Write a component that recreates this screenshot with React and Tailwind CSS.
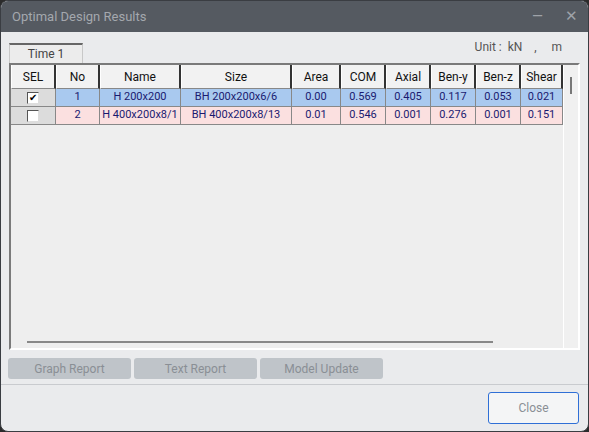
export default function App() {
  const cols = [
    ["SEL", 45], ["No", 44], ["Name", 81], ["Size", 111], ["Area", 49], ["COM", 45], ["Axial", 45], ["Ben-y", 45], ["Ben-z", 45], ["Shear", 42],
  ];
  const rows = [
    { bg: "bg-[#a9c9ef]", chk: true, v: ["1", "H 200x200", "BH 200x200x6/6", "0.00", "0.569", "0.405", "0.117", "0.053", "0.021"] },
    { bg: "bg-[#fbe0e0]", chk: false, v: ["2", "H 400x200x8/1", "BH 400x200x8/13", "0.01", "0.546", "0.001", "0.276", "0.001", "0.151"] },
  ];
  const grid = { fontFamily: "Roboto, 'Liberation Sans', sans-serif" };
  return (
    <div className="w-[589px] h-[432px] bg-[#2b2b2b] text-[12px]" style={{ fontFamily: "Roboto, 'Liberation Sans', sans-serif" }}>
      <div className="w-[589px] h-[432px] rounded-[8px] overflow-hidden bg-[#eaebed] flex flex-col border border-[#3a3d42]">
        <div className="h-[31px] bg-[#555a61] flex items-center pl-[11px] pr-[10px] shrink-0">
          <span className="text-[#a4a8ae] text-[13px] flex-1">Optimal Design Results</span>
          <span className="text-[#9ea2a8] text-[14px] mr-[22px]">—</span>
          <span className="text-[#9ea2a8] text-[15px]">✕</span>
        </div>
        <div className="flex items-end h-[31px] pl-[8px] pr-[26px] shrink-0">
          <div className="w-[74px] h-[20px] border-t-2 border-l border-r border-t-[#666] border-[#c8c8c8] bg-[#ececec] text-[#444] flex items-center justify-center">Time 1</div>
          <div className="flex-1 text-right text-[#555] mb-[7px] whitespace-pre">Unit :  kN    ,     m</div>
        </div>
        <div className="ml-[8px] mr-[8px] h-[287px] border-2 border-[#7a7a7a] border-r-white border-b-white bg-[#eeeeee] flex shrink-0" style={grid}>
          <div className="flex-1 flex flex-col">
            <div className="flex h-[24px] bg-[#f2f2f2]">
              {cols.map(([c, w]) => (
                <div key={c} style={{ width: w }} className="border-r-2 border-b border-r-[#333] border-b-[#888] border-l border-l-white flex items-center justify-center text-[#111] text-[12px] whitespace-nowrap">{c}</div>
              ))}
            </div>
            {rows.map((r, i) => (
              <div key={i} className={`flex h-[18px] ${r.bg}`}>
                <div style={{ width: 45 }} className="bg-[#dcdcdc] border-r border-b border-[#888] flex items-center justify-center">
                  <div className="w-[12px] h-[12px] bg-white border border-[#555] border-r-[#ddd] border-b-[#ddd] flex items-center justify-center text-[10px] leading-none text-black">{r.chk ? "✔" : ""}</div>
                </div>
                {r.v.map((t, j) => (
                  <div key={j} style={{ width: cols[j + 1][1] }} className="border-r border-b border-[#888] flex items-center justify-center text-[#1a1a70] text-[11px] whitespace-nowrap overflow-hidden">{t}</div>
                ))}
              </div>
            ))}
            <div className="flex-1" />
            <div className="h-[12px] flex items-center pl-[16px]">
              <div className="w-[466px] h-[2px] bg-[#888]" />
            </div>
          </div>
          <div className="w-[16px] bg-[#f0f0f0] border-l border-white flex justify-center pt-[12px]">
            <div className="w-[2px] h-[17px] bg-[#777]" />
          </div>
        </div>
        <div className="flex gap-[3px] pl-[7px] mt-[8px] shrink-0">
          {["Graph Report", "Text Report", "Model Update"].map((b) => (
            <div key={b} className="w-[123px] h-[21px] rounded-[3px] bg-[#bfc4c9] text-[#8a8f95] flex items-center justify-center text-[12px]">{b}</div>
          ))}
        </div>
        <div className="mt-[5px] border-t border-[#c9cbcf] flex justify-end pr-[9px] pt-[7px] shrink-0">
          <div className="w-[91px] h-[32px] rounded-[3px] border border-[#2f6fd6] bg-[#f4f5f6] text-[#8a8f95] flex items-center justify-center text-[12px]">Close</div>
        </div>
      </div>
    </div>
  );
}
